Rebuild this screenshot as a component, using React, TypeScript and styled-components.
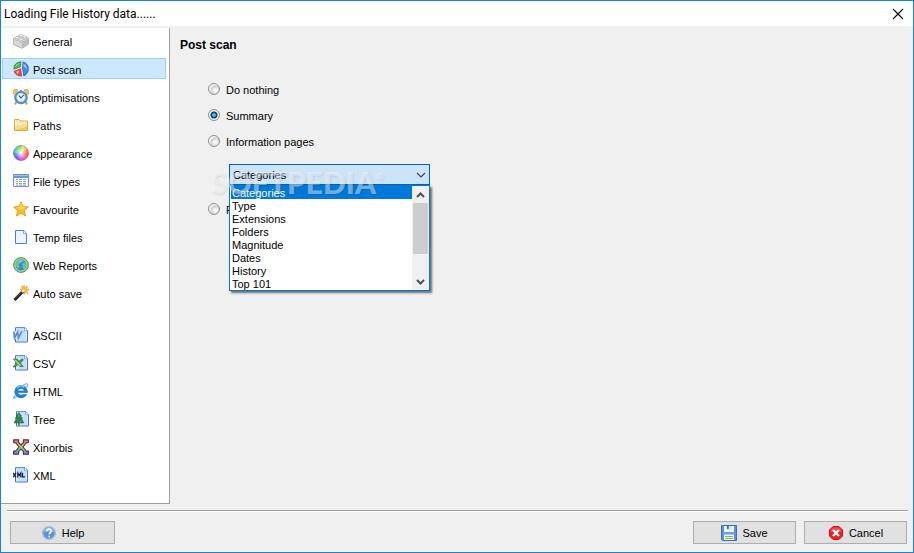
import React, { useState } from "react";
import styled, { createGlobalStyle } from "styled-components";

const GlobalStyle = createGlobalStyle`
  * { box-sizing: border-box; }
  body { margin: 0; background: #f0f0f0; }
  button, input, select { font: inherit; color: inherit; }
`;

const Window = styled.div`
  display: flex;
  flex-direction: column;
  min-height: 100vh;
  border: 1px solid #1883d7;
  background: #f0f0f0;
  color: #000;
  font: 11px/14px "Liberation Sans", Arial, sans-serif;
`;

const TitleBar = styled.header`
  display: flex;
  align-items: center;
  justify-content: space-between;
  height: 25px;
  padding: 0 9px 0 3px;
  background: #fff;
`;

const WindowTitle = styled.h1`
  margin: 0;
  font: 12px/16px Roboto, "Open Sans", sans-serif;
`;

const CloseButton = styled.button`
  display: flex;
  align-items: center;
  justify-content: center;
  width: 12px;
  height: 12px;
  padding: 0;
  border: 0;
  background: none;
`;

const Body = styled.div`
  display: flex;
  flex: 1;
  padding-top: 2px;
`;

const Sidebar = styled.nav`
  display: flex;
  flex-direction: column;
  gap: 21px;
  width: 169px;
  padding: 2px 3px 17px 1px;
  border-right: 1px solid #a0a0a0;
  border-bottom: 1px solid #a0a0a0;
  background: #fff;
`;

const NavGroup = styled.div`
  display: flex;
  flex-direction: column;
  gap: 7px;
`;

const NavItem = styled.button<{ $active: boolean }>`
  display: flex;
  align-items: center;
  gap: 4px;
  height: 21px;
  padding: 0 10px;
  border: 1px solid ${(p) => (p.$active ? "#99d1ff" : "transparent")};
  background: ${(p) => (p.$active ? "#cce8ff" : "transparent")};
  text-align: left;
`;

const NavLabel = styled.span`
  padding-top: 3px;
  white-space: nowrap;
`;

const Content = styled.main`
  flex: 1;
  padding: 9px 10px;
`;

const Heading = styled.h2`
  margin: 0;
  font: bold 12px/16px "Liberation Sans", Arial, sans-serif;
`;

const Options = styled.div`
  display: flex;
  flex-direction: column;
  gap: 12px;
  padding: 29px 0 0 28px;
`;

const Option = styled.label`
  display: flex;
  align-items: center;
  gap: 6px;
  height: 14px;
`;

const OptionLabel = styled.span`
  padding-top: 1px;
  white-space: nowrap;
`;

const Radio = styled.input`
  appearance: none;
  width: 12px;
  height: 12px;
  margin: 0;
  border: 1px solid #8e8f8f;
  border-radius: 50%;
  background: radial-gradient(circle at 65% 65%, #f6f6f6 0 15%, #c9ced3 50%, #f4f4f4 62%);

  &:checked {
    background: radial-gradient(circle at 50% 50%, #5ccdf2 0 1px, #0c77b5 2px, #12314d 3px, #f0f3f5 4px);
  }
`;

const Combo = styled.div`
  position: relative;
  width: 201px;
  margin: 4px 0 5px 21px;
`;

const Select = styled.select`
  display: block;
  appearance: none;
  width: 100%;
  height: 21px;
  padding: 0 3px;
  border: 1px solid #0062b1;
  border-radius: 0;
  outline: 0;
  background: #cce4f7;
`;

const Chevron = styled.svg`
  position: absolute;
  top: 8px;
  right: 4px;
  pointer-events: none;
`;

const Popup = styled.div`
  position: absolute;
  z-index: 1;
  top: 21px;
  left: 0;
  display: flex;
  width: 100%;
  height: 106px;
  border: 1px solid #0078d7;
  background: #fff;
  box-shadow: 2px 2px 2px rgba(0, 0, 0, 0.55);
`;

const OptionList = styled.ul`
  flex: 1;
  margin: 0;
  padding: 0 0 0 1px;
  overflow: hidden;
  list-style: none;
`;

const ListRow = styled.li<{ $selected: boolean }>`
  height: 13px;
  padding-left: 1px;
  line-height: 14px;
  background: ${(p) => (p.$selected ? "#0078d7" : "#fff")};
  color: ${(p) => (p.$selected ? "#fff" : "#000")};
`;

const ScrollBar = styled.div`
  display: flex;
  flex-direction: column;
  width: 17px;
  padding: 0 1px;
  background: #f0f0f0;
`;

const ScrollButton = styled.button`
  display: flex;
  align-items: center;
  justify-content: center;
  height: 17px;
  padding: 0;
  border: 0;
  background: none;
`;

const Track = styled.div`
  flex: 1;
`;

const Thumb = styled.div`
  height: 51px;
  background: #cdcdcd;
`;

const Watermark = styled.div`
  position: absolute;
  z-index: 2;
  top: 2px;
  left: -18px;
  color: rgba(255, 255, 255, 0.45);
  font: 900 30px/32px Lato, "Open Sans", sans-serif;
  text-shadow: 1px 1px 2px rgba(0, 0, 0, 0.1);
  white-space: nowrap;
  pointer-events: none;
`;

const Registered = styled.sup`
  font-size: 10px;
  line-height: 10px;
  vertical-align: 14px;
`;

const Footer = styled.footer`
  display: flex;
  gap: 8px;
  margin: 6px 5px 0 6px;
  padding: 10px 1px 8px 3px;
  border-top: 1px solid #a0a0a0;
  box-shadow: inset 0 1px 0 #fff;
`;

const Spacer = styled.div`
  flex: 1;
`;

const PushButton = styled.button<{ $width: number }>`
  display: flex;
  align-items: center;
  justify-content: center;
  gap: 5px;
  width: ${(p) => p.$width}px;
  height: 23px;
  padding: 0;
  border: 1px solid #adadad;
  background: #e1e1e1;
`;

const Svg = ({ children }: { children: React.ReactNode }) => (
  <svg width="16" height="16" viewBox="0 0 16 16" aria-hidden="true">
    {children}
  </svg>
);

const Brick = () => (
  <Svg>
    <path d="M.5 5.5 8 2.2l7.5 3v6L9 15.3.5 11.5z" fill="#d9d9d9" stroke="#b0b0b0" />
    <path d="M1 6 8 3l7 2.6L9 9z" fill="#f2f2f2" />
    <path d="m9 9 6-3.3v5.2L9 14.7z" fill="#bcbcbc" />
    {[[4.2, 4.6], [8, 2.3], [11.8, 3.8], [8, 6.2]].map(([x, y]) => (
      <g key={`${x}-${y}`} stroke="#aeaeae" strokeWidth=".6">
        <path d={`M${x - 2} ${y}v1.8a2 1.1 0 0 0 4 0V${y}`} fill="#d4d4d4" />
        <ellipse cx={x} cy={y} rx="2" ry="1.1" fill="#f8f8f8" />
      </g>
    ))}
  </Svg>
);

const Pie = () => (
  <Svg>
    <path d="M9.8.9C17 2.5 17 12 10.8 15L9 8z" fill="#4a86de" stroke="#2456a5" strokeWidth=".8" />
    <path d="M10.6 2.7c2.5 1.3 3.6 3.6 3.4 6-1.2-2.2-2-3-3.4-3.3z" fill="#a5cdf6" />
    <path d="M8.2.8 7.9 5.8 1 8.5C.3 4 3.6.9 8.2.8z" fill="#4fae55" stroke="#2f873b" strokeWidth=".8" />
    <path d="M7 2C4.4 2.6 2.6 4 2.2 6.3z" fill="#a9df9e" />
    <path d="m1.2 9.8 6.6-2.4 1 7.6C4 15 1.6 12.8 1.2 9.8z" fill="#e64747" stroke="#b82b2b" strokeWidth=".8" />
    <path d="m3 10.8 3.3-1.2-1.4 3.6z" fill="#f9bdb6" />
    <path d="m9 1-.5 6.2 1.2 8M1 9.3l7.5-2.7" fill="none" stroke="#fff" strokeWidth=".9" />
  </Svg>
);

const Clock = () => (
  <Svg>
    <path d="M1 5.5A3 3 0 0 1 5 1zm14 0A3 3 0 0 0 11 1z" fill="#f4c64a" stroke="#d6a040" strokeWidth=".8" />
    <path d="m3.5 12.5-1.5 3m10.5-3 1.5 3" stroke="#d69a27" strokeWidth="1.8" />
    <circle cx="8" cy="8.5" r="5.8" fill="#5c9fdf" stroke="#4c8fd0" strokeWidth="2" />
    <circle cx="8" cy="8.5" r="4.2" fill="#f1f7fd" stroke="#b8d6f1" />
    <path d="M6 6.7 8 9l2.7-3" fill="none" stroke="#2a4667" strokeWidth="1.1" />
    <path d="M7 1h2v1H7z" fill="#5d9bd6" />
  </Svg>
);

const Folder = () => (
  <Svg>
    <path d="M1.5 13.5V2.5H6l1 1.5h7.5v9.5z" fill="#fff6d3" stroke="#dfa747" />
    <path d="M4.5 6H13v2.5H4.5z" fill="#fff" stroke="#efcf86" strokeWidth=".7" />
    <path d="M2 13V8.5h5l2-1.5h5v6z" fill="#fae08c" />
    <path d="M2 13h12V9.5z" fill="#f2c95a" />
    <path d="M3 4h2.3" stroke="#f3c866" />
  </Svg>
);

const HUES = ["#e9f04e", "#ffbf4a", "#ff7a45", "#fb4a55", "#fb4790", "#ee48cf", "#b34ee7", "#6a50ed", "#4175f0", "#40bde8", "#43dc9a", "#72df52"];

const Wheel = () => (
  <Svg>
    <defs>
      <radialGradient id="wheel-shine">
        <stop offset="0" stopColor="#fff" />
        <stop offset=".8" stopColor="#fff" stopOpacity=".1" />
      </radialGradient>
    </defs>
    {HUES.map((hue, i) => (
      <path key={hue} d="M8 8V.5a7.5 7.5 0 0 1 4 1.2z" fill={hue} stroke={hue} strokeWidth=".3" transform={`rotate(${i * 30} 8 8)`} />
    ))}
    <circle cx="8" cy="8" r="7.4" fill="url(#wheel-shine)" stroke="#6b547b" strokeOpacity=".55" strokeWidth=".8" />
  </Svg>
);

const TableIcon = () => (
  <Svg>
    <path d="M.5 1.5h15v12H.5z" fill="#f8fbff" stroke="#6f94cc" />
    <path d="M1 2h14v3H1z" fill="#6699de" />
    <path d="M1 2.5h14" stroke="#9fc3ef" />
    <path d="M3 6.5h2m1 0h3m1 0h3M3 8.5h2m1 0h3m1 0h3M3 10.5h2m1 0h3m1 0h3M3 12.2h2m1 0h3m1 0h3" stroke="#8b95a3" strokeWidth=".9" />
  </Svg>
);

const Star = () => (
  <Svg>
    <path d="m8 .7 2.1 4.8 5.3.5-4 3.6 1.2 5.5L8 12.3l-4.6 2.8 1.2-5.5L.6 6l5.3-.5z" fill="#f3bf2b" stroke="#dda02a" strokeWidth=".9" strokeLinejoin="round" />
    <path d="m8 2 1.5 4.1 4.2.5-5.6 1.8-5.3-1.8 3.7-.5z" fill="#fbd755" />
  </Svg>
);

const Page = () => (
  <Svg>
    <path d="M2.5 1.5H11L13.5 4.5v10h-11z" fill="#edf4fc" stroke="#4b83c8" />
    <path d="M10.5 1.5v3.2h3" fill="#fff" stroke="#7ca9dc" />
  </Svg>
);

const Globe = () => (
  <Svg>
    <circle cx="8" cy="8" r="7.4" fill="#91ca8e" stroke="#4c9a54" />
    <circle cx="8" cy="8" r="5.9" fill="#3f88cb" stroke="#c3e6c0" strokeWidth=".6" />
    <path d="M3 5.5 6 2.5l3.5.2L8 5 5.5 7l1 2.5-1.2 2.7C3.3 10.5 2.2 8 3 5.5zM9.2 7l2.5-2 1.6 2-.6 3.4-2 2.3-1-3.2z" fill="#68c987" />
    <path d="M5 4c3-1.5 5-1 6 0L7 6z" fill="#91c9f4" opacity=".7" />
  </Svg>
);

const Wand = () => (
  <Svg>
    <path d="m11 0 .7 3L14.3.7 13.5 4l2.5.6-2.3 1.1 1.2 3-2.8-1.4-.9 2.3-1-2.4L7.5 8l1.2-2.5-2-1.3 2.6-.5L8.5.8l2 2z" fill="#f4c53a" stroke="#dda126" strokeWidth=".6" />
    <path d="m1.5 15 9-9.3" stroke="#242424" strokeWidth="3" />
    <path d="m2 13.5 7-7" stroke="#777" strokeWidth=".7" />
    <path d="m9 7 2-2" stroke="#f8f3df" strokeWidth="2.4" />
  </Svg>
);

const DocumentBase = () => (
  <>
    <path d="M2.5.7H12L14.5 3.3V15h-12z" fill="#e1effc" stroke="#3f78c4" strokeLinejoin="round" />
    <path d="M4 2h7v2.3h2.3V14H4z" fill="#c6dff7" />
    <path d="M11.5.8v3h3" fill="#fff" stroke="#6597d3" strokeWidth=".8" />
  </>
);

const WordDoc = () => (
  <Svg>
    <DocumentBase />
    <path d="M0 4h9.5L6 12H1z" fill="#d9e8f9" />
    <path d="m.9 4.5.6 6.5L4.7 5l.7 6L9 4.2" fill="none" stroke="#5a8bd6" strokeWidth="1.7" />
  </Svg>
);

const SheetDoc = () => (
  <Svg>
    <DocumentBase />
    <path d="M.5 4H4l2 2.2L9 4h1v1.5L7.3 8l3 3.5H6.8L5 9.3 2.3 12H0l3.5-4z" fill="#4d9744" stroke="#397335" strokeWidth=".7" />
    <path d="m2 4.8 5.6 6" stroke="#badeac" strokeWidth="1.2" />
  </Svg>
);

const Explorer = () => (
  <Svg>
    <circle cx="8" cy="8.7" r="4.8" fill="#e6f4fd" stroke="#247fd0" strokeWidth="3.6" />
    <path d="M10 9.6h5.5v1.6H10z" fill="#fff" />
    <path d="M5 8.7h9.6" stroke="#247fd0" strokeWidth="2.2" />
    <path d="M4 5.2c2-2.5 5-2.8 7.2-1" fill="none" stroke="#79c9f6" strokeWidth="1.4" />
    <path d="M3 11.5C-1 16 .7 16 4.4 13.4M10.5 2.2C14.8-.5 15.5 1 13.5 4.5" fill="none" stroke="#5bb3dd" strokeWidth="1.1" />
  </Svg>
);

const TreeDoc = () => (
  <Svg>
    <g transform="translate(1 0)"><DocumentBase /></g>
    <path d="M5 12h1.6v2.5H5z" fill="#87603a" />
    <path d="m5.8 1.5 2.6 3.3h-.9l2.1 2.6h-1l2.2 4.6H1l2.2-4.6H2l2.1-2.6h-.9z" fill="#288351" stroke="#1c6941" strokeWidth=".5" />
    <path d="M5.8 3v3m-1.5 3h1.4m1 1.5h1.6" stroke="#6cb46d" strokeWidth=".8" />
  </Svg>
);

const XinorbisIcon = () => (
  <Svg>
    <defs>
      <linearGradient id="xinorbis-x" x2="0" y2="1">
        <stop offset="0" stopColor="#e84d68" />
        <stop offset=".32" stopColor="#f0b063" />
        <stop offset=".58" stopColor="#89ce61" />
        <stop offset=".78" stopColor="#63b7d6" />
        <stop offset="1" stopColor="#9251cf" />
      </linearGradient>
    </defs>
    <path d="M.6.7h5v2.8L8 6l2.4-2.5V.7h5v3h-2L10 8l3.4 4.1h2v3.2h-5v-2.6L8 10l-2.4 2.7v2.6h-5v-3.2h2L6 8 2.6 3.7h-2z" fill="url(#xinorbis-x)" stroke="#49374a" strokeWidth="1.1" strokeLinejoin="round" />
  </Svg>
);

const XmlDoc = () => (
  <Svg>
    <DocumentBase />
    <path d="m0 5.8 3 4.5m0-4.5-3 4.5M4.8 10.4V6l1.5 2.3L7.8 6v4.4M9.5 5.8v4.1H12" fill="none" stroke="#111d36" strokeWidth="1.2" />
  </Svg>
);

const HelpIcon = () => (
  <Svg>
    <circle cx="8" cy="8" r="6.4" fill="#5f92d4" stroke="#a9c3e1" strokeWidth="1.4" />
    <path d="M2.5 7a5.5 5.5 0 0 1 11 0C10 7 7 6 2.5 7z" fill="#8fb6e6" />
    <path d="M5.8 6.2c0-3 4.6-2.7 4.4-.1-.1 1.6-2 1.5-2 3.2m0 1.4v1.5" fill="none" stroke="#fff" strokeWidth="1.6" />
  </Svg>
);

const SaveIcon = () => (
  <Svg>
    <path d="M.5.5h15v15H1.5l-1-1z" fill="#5b92dc" stroke="#3c6eb8" />
    <path d="M3 1h10v6H3z" fill="#edf4fb" />
    <path d="M5 1h6v4H5z" fill="#dbe6f3" />
    <path d="M6 1h1.8v3H6z" fill="#3e6eaa" />
    <path d="M2 8h12" stroke="#79a9e4" />
    <path d="M3 9.5h10V15H3z" fill="#f4faee" />
    <path d="M4 11.5h8m-8 2h8" stroke="#79bf57" />
  </Svg>
);

const CancelIcon = () => (
  <Svg>
    <path d="M5 1.5h6L14.5 5v6L11 14.5H5L1.5 11V5z" fill="#ed2026" stroke="#dc0d17" strokeLinejoin="round" />
    <path d="M5.3 2.5h5.5l2.5 2.8v2C10 6 6.5 6 2.7 7.5V5.2z" fill="#f6696a" opacity=".6" />
    <path d="m5 5 6 6m0-6-6 6" stroke="#fff" strokeWidth="2.3" />
  </Svg>
);

const Arrow = ({ up = false }: { up?: boolean }) => (
  <svg width="9" height="6" viewBox="0 0 9 6" aria-hidden="true">
    <path d={up ? "m1 5 3.5-3.5L8 5" : "m1 1 3.5 3.5L8 1"} fill="none" stroke="#505050" strokeWidth="2" />
  </svg>
);

const GROUPS: [string, React.FC][][] = [
  [
    ["General", Brick],
    ["Post scan", Pie],
    ["Optimisations", Clock],
    ["Paths", Folder],
    ["Appearance", Wheel],
    ["File types", TableIcon],
    ["Favourite", Star],
    ["Temp files", Page],
    ["Web Reports", Globe],
    ["Auto save", Wand],
  ],
  [
    ["ASCII", WordDoc],
    ["CSV", SheetDoc],
    ["HTML", Explorer],
    ["Tree", TreeDoc],
    ["Xinorbis", XinorbisIcon],
    ["XML", XmlDoc],
  ],
];

const CATEGORIES = ["Categories", "Type", "Extensions", "Folders", "Magnitude", "Dates", "History", "Top 101"];

export default function App() {
  const [section, setSection] = useState("Post scan");
  const [action, setAction] = useState("Summary");
  const [category, setCategory] = useState("Categories");

  const renderOption = (name: string) => (
    <Option key={name}>
      <Radio type="radio" name="action" checked={action === name} onChange={() => setAction(name)} />
      <OptionLabel>{name}</OptionLabel>
    </Option>
  );

  return (
    <Window>
      <GlobalStyle />
      <TitleBar>
        <WindowTitle>Loading File History data......</WindowTitle>
        <CloseButton aria-label="Close">
          <svg width="12" height="12" viewBox="0 0 12 12" aria-hidden="true">
            <path d="m1 1 10 10M11 1 1 11" stroke="#000" strokeWidth="1.1" />
          </svg>
        </CloseButton>
      </TitleBar>
      <Body>
        <Sidebar>
          {GROUPS.map((group) => (
            <NavGroup key={group[0][0]}>
              {group.map(([name, Icon]) => (
                <NavItem key={name} $active={name === section} onClick={() => setSection(name)}>
                  <Icon />
                  <NavLabel>{name}</NavLabel>
                </NavItem>
              ))}
            </NavGroup>
          ))}
        </Sidebar>
        <Content>
          <Heading>Post scan</Heading>
          <Options>
            {["Do nothing", "Summary", "Information pages"].map(renderOption)}
            <Combo>
              <Select aria-label="Information page" value={category} onChange={(e) => setCategory(e.target.value)}>
                {CATEGORIES.map((name) => (
                  <option key={name}>{name}</option>
                ))}
              </Select>
              <Chevron width="10" height="6" viewBox="0 0 10 6" aria-hidden="true">
                <path d="m1 1 4 4 4-4" fill="none" stroke="#404040" strokeWidth="1.1" />
              </Chevron>
              <Popup>
                <OptionList role="listbox" aria-label="Information pages">
                  {CATEGORIES.map((name) => (
                    <ListRow key={name} role="option" aria-selected={name === category} $selected={name === category} onClick={() => setCategory(name)}>
                      {name}
                    </ListRow>
                  ))}
                </OptionList>
                <ScrollBar>
                  <ScrollButton aria-label="Scroll up"><Arrow up /></ScrollButton>
                  <Track><Thumb /></Track>
                  <ScrollButton aria-label="Scroll down"><Arrow /></ScrollButton>
                </ScrollBar>
              </Popup>
              <Watermark>SOFTPEDIA<Registered>®</Registered></Watermark>
            </Combo>
            {renderOption("F")}
          </Options>
        </Content>
      </Body>
      <Footer>
        <PushButton $width={105}><HelpIcon />Help</PushButton>
        <Spacer />
        <PushButton $width={103}><SaveIcon />Save</PushButton>
        <PushButton $width={103}><CancelIcon />Cancel</PushButton>
      </Footer>
    </Window>
  );
}
